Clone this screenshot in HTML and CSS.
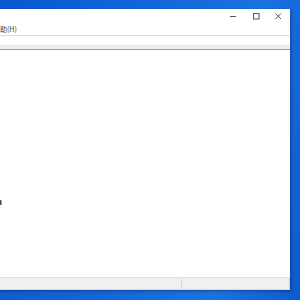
FILE: index.html
```html
<!DOCTYPE html>
<html lang="zh-CN">
<head>
  <meta charset="UTF-8">
  <title>记事本</title>
  <link rel="stylesheet" href="styles.css">
</head>
<body>
  <div class="desktop">
    <div class="window">
      <div class="titlebar">
        <div class="title-buttons">
          <span class="tb-btn">
            <svg width="7" height="7" viewBox="0 0 7 7"><path d="M0 3.5H6" stroke="#555" stroke-width="1"/></svg>
          </span>
          <span class="tb-btn">
            <svg width="7" height="7" viewBox="0 0 7 7"><rect x="0.5" y="0.5" width="5.5" height="5.5" fill="none" stroke="#555" stroke-width="1"/></svg>
          </span>
          <span class="tb-btn">
            <svg width="7" height="7" viewBox="0 0 7 7"><path d="M0.5 0.5L6 6M6 0.5L0.5 6" stroke="#555" stroke-width="1"/></svg>
          </span>
        </div>
      </div>
      <div class="menubar">
        <span class="menu-item">帮助(H)</span>
      </div>
      <div class="toolbar"></div>
      <div class="content">
        <div class="stray">&#9632;</div>
      </div>
      <div class="statusbar">
        <div class="status-cell main"></div>
        <div class="status-cell side"></div>
      </div>
    </div>
  </div>
</body>
</html>
```

FILE: styles.css
```css
html, body { margin: 0; padding: 0; }
body { font-family: "Noto Sans CJK SC", "Liberation Sans", sans-serif; }

.desktop {
  position: relative;
  width: 300px; height: 300px; overflow: hidden;
  background: linear-gradient(100deg, #0a58cf 0%, #1467d8 45%, #1b73e2 75%, #0d5ad0 100%);
}

.window {
  position: absolute;
  left: -40px; top: 9px;
  width: 330px; height: 281px;
  background: #fff;
  display: flex; flex-direction: column;
  box-shadow: 1px 1px 3px rgba(0, 0, 0, 0.35);
}

.titlebar {
  height: 15px;
  display: flex; justify-content: flex-end;
}
.title-buttons { display: flex; }
.tb-btn {
  width: 22.5px; height: 15px;
  display: flex; align-items: center; justify-content: center;
}

.menubar {
  height: 11px;
  display: flex; align-items: center;
  padding-left: 33px;
  border-bottom: 1px solid #dcdcdc;
}
.menu-item { font-size: 7px; color: #444; line-height: 11px; }

.toolbar {
  height: 13px;
  background: linear-gradient(#fff 0%, #fff 65%, #eeeeee 66%, #eeeeee 100%);
  border-bottom: 1px solid #9a9a9a;
}

.content { flex: 1; position: relative; }
.stray {
  position: absolute; left: 36px; top: 150px;
  font-size: 6px; color: #444; line-height: 6px;
}

.statusbar {
  height: 11px;
  display: flex;
  background: #f0f0f0;
  border-top: 1px solid #e2e2e2;
  border-bottom: 1px solid #d8d8d8;
}
.status-cell.main { width: 221px; border-right: 1px solid #dadada; }
.status-cell.side { flex: 1; border-right: 1px solid #d0d0d0; }
```
